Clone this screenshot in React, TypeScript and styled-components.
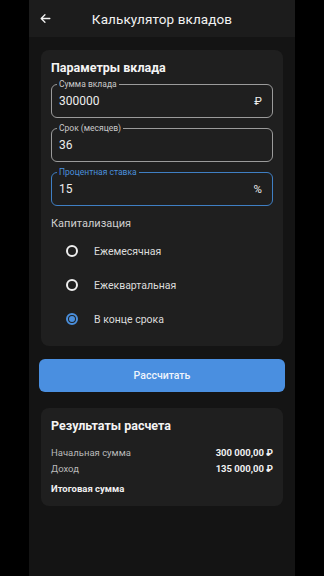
import React, { useState } from 'react'
import styled, { createGlobalStyle } from 'styled-components'

const GlobalStyle = createGlobalStyle`
  html, body {
    margin: 0;
    padding: 0;
    background: #000;
  }
  body {
    font-family: Roboto, "Noto Sans", "Liberation Sans", sans-serif;
    color: #f2f2f2;
  }
`

type Cap = 'monthly' | 'quarterly' | 'end'

const capOptions: { id: Cap; label: string }[] = [
  { id: 'monthly', label: 'Ежемесячная' },
  { id: 'quarterly', label: 'Ежеквартальная' },
  { id: 'end', label: 'В конце срока' },
]

const App: React.FC = () => {
  const [cap, setCap] = useState<Cap>('end')

  return (
    <>
      <GlobalStyle />
      <Screen>
        <Header>
          <BackButton aria-label="Назад">
            <svg width="13" height="13" viewBox="0 0 24 24" fill="none">
              <path
                d="M20 12H5M11 5l-7 7 7 7"
                stroke="#f2f2f2"
                strokeWidth="2.4"
                strokeLinecap="round"
                strokeLinejoin="round"
              />
            </svg>
          </BackButton>
          <Title>Калькулятор вкладов</Title>
        </Header>

        <Content>
          <Card>
            <CardTitle>Параметры вклада</CardTitle>
            <Fields>
              <Field>
                <FieldLabel>Сумма вклада</FieldLabel>
                <FieldValue>300000</FieldValue>
                <Suffix>₽</Suffix>
              </Field>
              <Field>
                <FieldLabel>Срок (месяцев)</FieldLabel>
                <FieldValue>36</FieldValue>
              </Field>
              <Field focused>
                <FieldLabel focused>Процентная ставка</FieldLabel>
                <FieldValue>15</FieldValue>
                <Suffix>%</Suffix>
              </Field>
            </Fields>
            <SectionLabel>Капитализация</SectionLabel>
            <RadioList>
              {capOptions.map((o) => (
                <RadioRow key={o.id} onClick={() => setCap(o.id)}>
                  <RadioDot checked={cap === o.id} />
                  <span>{o.label}</span>
                </RadioRow>
              ))}
            </RadioList>
          </Card>

          <PrimaryButton>Рассчитать</PrimaryButton>

          <Card results>
            <CardTitle>Результаты расчета</CardTitle>
            <ResultList>
              <ResultRow>
                <span>Начальная сумма</span>
                <Amount>300 000,00 ₽</Amount>
              </ResultRow>
              <ResultRow>
                <span>Доход</span>
                <Amount>135 000,00 ₽</Amount>
              </ResultRow>
              <ResultRow total>
                <span>Итоговая сумма</span>
                <Amount />
              </ResultRow>
            </ResultList>
          </Card>
        </Content>
      </Screen>
    </>
  )
}

const Screen = styled.div`
  width: 266px;
  min-height: 576px;
  margin: 0 auto;
  background: #141414;
`

const Header = styled.header`
  height: 37px;
  background: #1c1c1c;
  display: grid;
  grid-template-columns: 32px 1fr 32px;
  align-items: center;
  padding: 0;
  box-sizing: border-box;
`

const BackButton = styled.button`
  background: none;
  border: none;
  padding: 0;
  display: flex;
  align-items: center;
  justify-content: center;
  width: 32px;
  height: 32px;
  cursor: pointer;
`

const Title = styled.h1`
  margin: 0;
  text-align: center;
  font-size: 13.5px;
  font-weight: 400;
  color: #f2f2f2;
  letter-spacing: 0.1px;
`

const Content = styled.main`
  padding: 13px 12px 0;
  display: flex;
  flex-direction: column;
  gap: 13px;
`

const Card = styled.section<{ results?: boolean }>`
  background: #1f1f1f;
  border-radius: 8px;
  padding: 10px 10px ${(p) => (p.results ? '12px' : '10px')};
  margin-top: ${(p) => (p.results ? '3px' : '0')};
`

const CardTitle = styled.h2`
  margin: 0 0 9px;
  font-size: 12.5px;
  font-weight: 700;
  color: #f4f4f4;
`

const Fields = styled.div`
  display: flex;
  flex-direction: column;
  gap: 10px;
`

const Field = styled.div<{ focused?: boolean }>`
  position: relative;
  height: 34px;
  border: 1px solid ${(p) => (p.focused ? '#3f7fc4' : '#9b9b9b')};
  border-width: ${(p) => (p.focused ? '1.5px' : '1px')};
  border-radius: 6px;
  display: flex;
  align-items: center;
  padding: 0 10px 0 7px;
  box-sizing: border-box;
`

const FieldLabel = styled.span<{ focused?: boolean }>`
  position: absolute;
  top: -6px;
  left: 5px;
  padding: 0 2px;
  background: #1f1f1f;
  font-size: 8.5px;
  line-height: 11px;
  color: ${(p) => (p.focused ? '#4a8fdc' : '#c9c9c9')};
`

const FieldValue = styled.span`
  flex: 1;
  font-size: 12px;
  color: #ededed;
`

const Suffix = styled.span`
  font-size: 11.5px;
  color: #ededed;
`

const SectionLabel = styled.div`
  margin-top: 11px;
  font-size: 11px;
  color: #cfcfcf;
`

const RadioList = styled.div`
  display: flex;
  flex-direction: column;
  padding: 4px 0 0 15px;
`

const RadioRow = styled.label`
  height: 34px;
  display: flex;
  align-items: center;
  gap: 16px;
  font-size: 10.5px;
  color: #dcdcdc;
  cursor: pointer;
`

const RadioDot = styled.span<{ checked: boolean }>`
  width: 8px;
  height: 8px;
  border-radius: 50%;
  border: 2px solid ${(p) => (p.checked ? '#4a8fdc' : '#eeeeee')};
  display: flex;
  align-items: center;
  justify-content: center;
  &::after {
    content: '';
    width: 6px;
    height: 6px;
    border-radius: 50%;
    background: ${(p) => (p.checked ? '#4a8fdc' : 'transparent')};
  }
`

const PrimaryButton = styled.button`
  margin: 0 -2px;
  height: 33px;
  border: none;
  border-radius: 6px;
  background: #4a8fe0;
  color: #eef4fc;
  font-family: inherit;
  font-size: 10.5px;
  font-weight: 500;
  cursor: pointer;
`

const ResultList = styled.div`
  display: flex;
  flex-direction: column;
  gap: 4px;
  padding-top: 4px;
`

const ResultRow = styled.div<{ total?: boolean }>`
  display: flex;
  justify-content: space-between;
  align-items: center;
  height: 12px;
  font-size: 9.5px;
  color: ${(p) => (p.total ? '#f0f0f0' : '#b9b9b9')};
  font-weight: ${(p) => (p.total ? 700 : 400)};
  margin-top: ${(p) => (p.total ? '4px' : '0')};
`

const Amount = styled.span`
  font-weight: 700;
  color: #f0f0f0;
`

export default App
